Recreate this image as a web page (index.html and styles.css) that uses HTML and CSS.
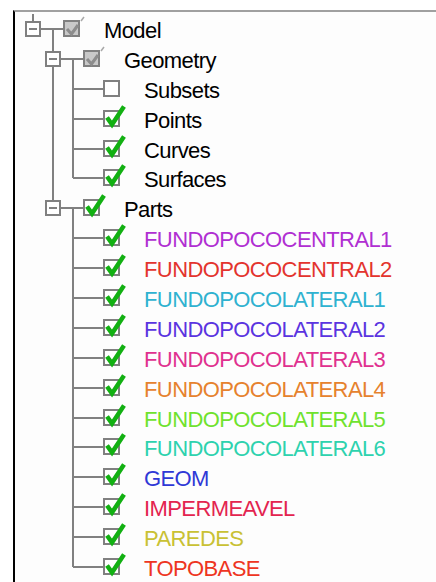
FILE: index.html
```html
<!DOCTYPE html>
<html lang="en">
<head>
    <meta charset="UTF-8">
    <title>Model tree</title>
    <link rel="stylesheet" href="styles.css">
</head>
<body>

<div class="panel">
    <div class="tree">

        <div class="row">
            <span class="cell expander up"><span class="box"></span></span>
            <span class="cell branch"></span>
            <svg class="check" viewBox="0 0 26 30" width="26" height="30"><rect class="frame grey" x="1" y="7" width="15" height="15"/><path class="mark grey" d="M4 15 L8.5 20 L15 11"/><path class="tick" d="M18 7 L21 3"/></svg>
            <span class="label">Model</span>
        </div>

        <div class="row">
            <span class="cell"></span>
            <span class="cell expander up down"><span class="box"></span></span>
            <span class="cell branch"></span>
            <svg class="check" viewBox="0 0 26 30" width="26" height="30"><rect class="frame grey" x="1" y="7" width="15" height="15"/><path class="mark grey" d="M4 15 L8.5 20 L15 11"/><path class="tick" d="M18 7 L21 3"/></svg>
            <span class="label">Geometry</span>
        </div>

        <div class="row">
            <span class="cell"></span>
            <span class="cell pipe"></span>
            <span class="cell tee"></span>
            <span class="cell dash"></span>
            <svg class="check" viewBox="0 0 26 30" width="26" height="30"><rect class="frame" x="1" y="7" width="15" height="15"/></svg>
            <span class="label">Subsets</span>
        </div>

        <div class="row">
            <span class="cell"></span>
            <span class="cell pipe"></span>
            <span class="cell tee"></span>
            <span class="cell dash"></span>
            <svg class="check" viewBox="0 0 26 30" width="26" height="30"><rect class="frame" x="1" y="7" width="15" height="15"/><path class="mark" d="M4 13.5 L9 20.5 L21 2.5"/></svg>
            <span class="label">Points</span>
        </div>

        <div class="row">
            <span class="cell"></span>
            <span class="cell pipe"></span>
            <span class="cell tee"></span>
            <span class="cell dash"></span>
            <svg class="check" viewBox="0 0 26 30" width="26" height="30"><rect class="frame" x="1" y="7" width="15" height="15"/><path class="mark" d="M4 13.5 L9 20.5 L21 2.5"/></svg>
            <span class="label">Curves</span>
        </div>

        <div class="row">
            <span class="cell"></span>
            <span class="cell pipe"></span>
            <span class="cell elbow"></span>
            <span class="cell dash"></span>
            <svg class="check" viewBox="0 0 26 30" width="26" height="30"><rect class="frame" x="1" y="7" width="15" height="15"/><path class="mark" d="M4 13.5 L9 20.5 L21 2.5"/></svg>
            <span class="label">Surfaces</span>
        </div>

        <div class="row">
            <span class="cell"></span>
            <span class="cell expander up"><span class="box"></span></span>
            <span class="cell branch"></span>
            <svg class="check" viewBox="0 0 26 30" width="26" height="30"><rect class="frame" x="1" y="7" width="15" height="15"/><path class="mark" d="M4 13.5 L9 20.5 L21 2.5"/></svg>
            <span class="label">Parts</span>
        </div>

        <div class="row">
            <span class="cell"></span><span class="cell"></span>
            <span class="cell tee"></span><span class="cell dash"></span>
            <svg class="check" viewBox="0 0 26 30" width="26" height="30"><rect class="frame" x="1" y="7" width="15" height="15"/><path class="mark" d="M4 13.5 L9 20.5 L21 2.5"/></svg>
            <span class="label c1">FUNDOPOCOCENTRAL1</span>
        </div>

        <div class="row">
            <span class="cell"></span><span class="cell"></span>
            <span class="cell tee"></span><span class="cell dash"></span>
            <svg class="check" viewBox="0 0 26 30" width="26" height="30"><rect class="frame" x="1" y="7" width="15" height="15"/><path class="mark" d="M4 13.5 L9 20.5 L21 2.5"/></svg>
            <span class="label c2">FUNDOPOCOCENTRAL2</span>
        </div>

        <div class="row">
            <span class="cell"></span><span class="cell"></span>
            <span class="cell tee"></span><span class="cell dash"></span>
            <svg class="check" viewBox="0 0 26 30" width="26" height="30"><rect class="frame" x="1" y="7" width="15" height="15"/><path class="mark" d="M4 13.5 L9 20.5 L21 2.5"/></svg>
            <span class="label c3">FUNDOPOCOLATERAL1</span>
        </div>

        <div class="row">
            <span class="cell"></span><span class="cell"></span>
            <span class="cell tee"></span><span class="cell dash"></span>
            <svg class="check" viewBox="0 0 26 30" width="26" height="30"><rect class="frame" x="1" y="7" width="15" height="15"/><path class="mark" d="M4 13.5 L9 20.5 L21 2.5"/></svg>
            <span class="label c4">FUNDOPOCOLATERAL2</span>
        </div>

        <div class="row">
            <span class="cell"></span><span class="cell"></span>
            <span class="cell tee"></span><span class="cell dash"></span>
            <svg class="check" viewBox="0 0 26 30" width="26" height="30"><rect class="frame" x="1" y="7" width="15" height="15"/><path class="mark" d="M4 13.5 L9 20.5 L21 2.5"/></svg>
            <span class="label c5">FUNDOPOCOLATERAL3</span>
        </div>

        <div class="row">
            <span class="cell"></span><span class="cell"></span>
            <span class="cell tee"></span><span class="cell dash"></span>
            <svg class="check" viewBox="0 0 26 30" width="26" height="30"><rect class="frame" x="1" y="7" width="15" height="15"/><path class="mark" d="M4 13.5 L9 20.5 L21 2.5"/></svg>
            <span class="label c6">FUNDOPOCOLATERAL4</span>
        </div>

        <div class="row">
            <span class="cell"></span><span class="cell"></span>
            <span class="cell tee"></span><span class="cell dash"></span>
            <svg class="check" viewBox="0 0 26 30" width="26" height="30"><rect class="frame" x="1" y="7" width="15" height="15"/><path class="mark" d="M4 13.5 L9 20.5 L21 2.5"/></svg>
            <span class="label c7">FUNDOPOCOLATERAL5</span>
        </div>

        <div class="row">
            <span class="cell"></span><span class="cell"></span>
            <span class="cell tee"></span><span class="cell dash"></span>
            <svg class="check" viewBox="0 0 26 30" width="26" height="30"><rect class="frame" x="1" y="7" width="15" height="15"/><path class="mark" d="M4 13.5 L9 20.5 L21 2.5"/></svg>
            <span class="label c8">FUNDOPOCOLATERAL6</span>
        </div>

        <div class="row">
            <span class="cell"></span><span class="cell"></span>
            <span class="cell tee"></span><span class="cell dash"></span>
            <svg class="check" viewBox="0 0 26 30" width="26" height="30"><rect class="frame" x="1" y="7" width="15" height="15"/><path class="mark" d="M4 13.5 L9 20.5 L21 2.5"/></svg>
            <span class="label c9">GEOM</span>
        </div>

        <div class="row">
            <span class="cell"></span><span class="cell"></span>
            <span class="cell tee"></span><span class="cell dash"></span>
            <svg class="check" viewBox="0 0 26 30" width="26" height="30"><rect class="frame" x="1" y="7" width="15" height="15"/><path class="mark" d="M4 13.5 L9 20.5 L21 2.5"/></svg>
            <span class="label c10">IMPERMEAVEL</span>
        </div>

        <div class="row">
            <span class="cell"></span><span class="cell"></span>
            <span class="cell tee"></span><span class="cell dash"></span>
            <svg class="check" viewBox="0 0 26 30" width="26" height="30"><rect class="frame" x="1" y="7" width="15" height="15"/><path class="mark" d="M4 13.5 L9 20.5 L21 2.5"/></svg>
            <span class="label c11">PAREDES</span>
        </div>

        <div class="row">
            <span class="cell"></span><span class="cell"></span>
            <span class="cell elbow"></span><span class="cell dash"></span>
            <svg class="check" viewBox="0 0 26 30" width="26" height="30"><rect class="frame" x="1" y="7" width="15" height="15"/><path class="mark" d="M4 13.5 L9 20.5 L21 2.5"/></svg>
            <span class="label c12">TOPOBASE</span>
        </div>

    </div>
</div>

</body>
</html>
```

FILE: styles.css
```css
body {
    margin: 0;
    background-color: #fff;
    font-family: "Liberation Sans", Arial, sans-serif;
}
.panel {
    margin: 10px 0 0 13px;
    height: 572px;
    border-top: 2px solid #a0a0a0;
    border-left: 2px solid #000;
    background-color: #fdfdfd;
    overflow: hidden;
}
.tree {
    padding: 2px 0 0 8px;
}
.row {
    display: flex;
    align-items: center;
    height: 29.9px;
}
.cell {
    flex: none;
    width: 20px;
    height: 100%;
    display: flex;
    align-items: center;
    --line: linear-gradient(#808080, #808080);
}
.pipe {
    background: var(--line) 9px 0 / 2px 100% no-repeat;
}
.tee {
    background: var(--line) 9px 0 / 2px 100% no-repeat,
                var(--line) 10px 50% / 10px 2px no-repeat;
}
.elbow {
    background: var(--line) 9px 0 / 2px 50% no-repeat,
                var(--line) 10px 50% / 10px 2px no-repeat;
}
.dash {
    background: var(--line) 0 50% / 100% 2px no-repeat;
}
.branch {
    background: var(--line) 9px 100% / 2px 50% no-repeat,
                var(--line) 0 50% / 100% 2px no-repeat;
}
.expander {
    background: var(--line) 10px 50% / 10px 2px no-repeat;
}
.expander.up {
    background: var(--line) 9px 0 / 2px 50% no-repeat,
                var(--line) 10px 50% / 10px 2px no-repeat;
}
.expander.up.down {
    background: var(--line) 9px 0 / 2px 100% no-repeat,
                var(--line) 10px 50% / 10px 2px no-repeat;
}
.box {
    width: 12px;
    height: 12px;
    margin-left: 2px;
    border: 2px solid #808080;
    background: #fff linear-gradient(#808080, #808080) center / 8px 2px no-repeat;
}
.check {
    flex: none;
    overflow: visible;
}
.frame {
    fill: #fff;
    stroke: #808080;
    stroke-width: 2;
}
.frame.grey {
    fill: #c8c8c8;
}
.mark {
    fill: none;
    stroke: #12b012;
    stroke-width: 4.5;
    stroke-linejoin: miter;
}
.mark.grey {
    stroke: #8c8c8c;
    stroke-width: 3;
}
.tick {
    fill: none;
    stroke: #a8a8a8;
    stroke-width: 1.5;
}
.label {
    margin-left: 15px;
    padding-top: 4px;
    font-size: 22px;
    letter-spacing: -0.6px;
    color: #000;
    white-space: nowrap;
}
.c1 { color: #b02fd2; }
.c2 { color: #e3342e; }
.c3 { color: #2fb2d0; }
.c4 { color: #5a34e0; }
.c5 { color: #e0318f; }
.c6 { color: #e6822e; }
.c7 { color: #6fe22e; }
.c8 { color: #2ed2ae; }
.c9 { color: #2f38d6; }
.c10 { color: #e3244f; }
.c11 { color: #c9c134; }
.c12 { color: #ee3522; }
```
